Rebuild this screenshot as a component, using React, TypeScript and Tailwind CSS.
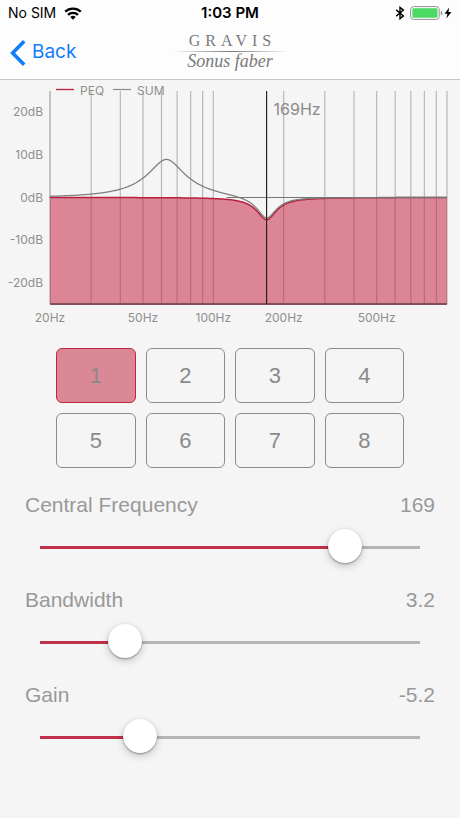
import { useState } from 'react';

interface Filter {
  frequency: number;
  q: number;
  gain: number;
}

interface SliderRowProps {
  id: string;
  label: string;
  value: number;
  min: number;
  max: number;
  step: number;
  onChange: (value: number) => void;
}

const BANDS = [1, 2, 3, 4, 5, 6, 7, 8];
const GRID_FREQUENCIES = [30, 40, 50, 60, 70, 80, 90, 100, 200, 300, 400, 500, 600, 700, 800, 900, 1000];
const FREQUENCY_LABELS = [20, 50, 100, 200, 500];
const GAIN_LABELS = [20, 10, 0, -10, -20];

const ROOM_FILTER: Filter = { frequency: 63, q: 2.1, gain: 9 };

const PLOT = { left: 50, right: 447, top: 11, bottom: 224 };
const MIN_FREQUENCY = 20;
const MAX_FREQUENCY = 1000;
const GAIN_SPAN = 50;

export default function App() {
  const [band, setBand] = useState(1);
  const [frequency, setFrequency] = useState(169);
  const [bandwidth, setBandwidth] = useState(3.2);
  const [gain, setGain] = useState(-5.2);

  return (
    <div className="min-h-screen bg-[#f5f5f5] font-['Liberation_Sans',Arial,sans-serif] text-[#8a8a8a]">
      <header className="border-b border-[#c6c6c6] bg-[#fdfdfd] font-[Inter,sans-serif]">
        <StatusBar />
        <NavBar />
      </header>

      <main>
        <ResponseChart filter={{ frequency, q: bandwidth * 1.3, gain }} />

        <div className="grid grid-cols-4 gap-[10px] px-14 pt-2">
          {BANDS.map(n => (
            <button
              key={n}
              type="button"
              aria-pressed={n === band}
              onClick={() => setBand(n)}
              className={
                n === band
                  ? 'h-[55px] rounded-md border border-[#bd2743] bg-[#db8896] text-[22px]'
                  : 'h-[55px] rounded-md border border-[#8c8c8c] text-[22px]'
              }
            >
              {n}
            </button>
          ))}
        </div>

        <div className="flex flex-col gap-6 px-[25px] pt-[25px] pb-14 text-[#999]">
          <SliderRow id="frequency" label="Central Frequency" value={frequency} min={20} max={200} step={1} onChange={setFrequency} />
          <SliderRow id="bandwidth" label="Bandwidth" value={bandwidth} min={1} max={12} step={0.1} onChange={setBandwidth} />
          <SliderRow id="gain" label="Gain" value={gain} min={-12} max={16} step={0.1} onChange={setGain} />
        </div>
      </main>
    </div>
  );
}

function StatusBar() {
  return (
    <div className="grid h-[26px] grid-cols-3 items-center px-2 leading-5 text-black">
      <div className="flex items-center gap-2 text-sm">
        <span>No SIM</span>
        <svg viewBox="0 0 18 13" className="h-[13px] w-[18px]" fill="none" stroke="#000" strokeWidth="2.4">
          <path d="M1.2 4.7a11.4 11.4 0 0 1 15.6 0" />
          <path d="M4 7.9a7.3 7.3 0 0 1 10 0" />
          <path d="M9 12.8 6.3 10.1a3.9 3.9 0 0 1 5.4 0z" fill="#000" stroke="none" />
        </svg>
      </div>
      <span className="text-center text-[15px] font-semibold">1:03 PM</span>
      <div className="flex items-center justify-end gap-[5px]">
        <svg viewBox="0 0 10 14" className="h-[14px] w-[10px]" fill="none" stroke="#000" strokeWidth="1.4">
          <path d="M1.2 3.9 8.4 9.9 5 12.6V1.4l3.4 2.7-7.2 6" />
        </svg>
        <svg viewBox="0 0 33 14" className="h-[14px] w-[33px]">
          <rect x="0.6" y="0.6" width="28.6" height="12.8" rx="3" fill="#fff" stroke="#8e8e8e" />
          <rect x="2.3" y="2.2" width="25.2" height="9.6" rx="1.4" fill="#4cd964" />
          <path d="M30.8 4.6a2.6 2.6 0 0 1 0 4.8z" fill="#8e8e8e" />
        </svg>
        <svg viewBox="0 0 8 12" className="-ml-1 h-3 w-2">
          <path d="M5.2.5.6 6.8h2.8L2.4 11.5 7.4 5H4.4z" fill="#000" />
        </svg>
      </div>
    </div>
  );
}

function NavBar() {
  return (
    <div className="grid h-[53px] grid-cols-[1fr_auto_1fr] items-center">
      <a href="#" className="flex items-center gap-[6px] pl-[10px] text-[19px] text-[#117dfa]">
        <svg viewBox="0 0 16 26" className="h-[26px] w-4" fill="none" stroke="currentColor" strokeWidth="3.6">
          <path d="M14.2 1.3 2.6 13l11.6 11.7" />
        </svg>
        Back
      </a>
      <div className="flex w-[117px] flex-col items-center pb-[2px] font-['Liberation_Serif',serif] text-[#7a7a7a]">
        <span className="pb-[2px] pl-[5px] text-base leading-4 tracking-[5px]">GRAVIS</span>
        <span className="h-px w-full bg-linear-to-r from-transparent via-[#7a7a7a] to-transparent" />
        <span className="text-lg leading-[18px] italic">Sonus faber</span>
      </div>
    </div>
  );
}

function ResponseChart({ filter }: { filter: Filter }) {
  const peq = buildCurve([filter]);
  const sum = buildCurve([filter, ROOM_FILTER]);
  const cursor = xFor(filter.frequency);

  return (
    <svg viewBox="0 0 460 260" className="block w-full font-[Inter,sans-serif]" role="img" aria-label="Frequency response">
      {GRID_FREQUENCIES.map(f => (
        <line key={f} x1={xFor(f)} x2={xFor(f)} y1={PLOT.top} y2={PLOT.bottom} stroke="#b8b8b8" strokeWidth="1.2" />
      ))}
      <line x1={PLOT.left} x2={PLOT.left} y1={PLOT.top} y2={PLOT.bottom} stroke="#a0a0a0" strokeWidth="1.2" />

      <path d={`${peq}L${PLOT.right} ${PLOT.bottom}L${PLOT.left} ${PLOT.bottom}Z`} fill="#c41e3f" fillOpacity="0.52" />
      <path d={peq} fill="none" stroke="#b8203f" strokeWidth="1.5" />
      <path d={sum} fill="none" stroke="#808080" strokeWidth="1.3" />
      <line x1={cursor - 40} x2={PLOT.right} y1={yFor(0)} y2={yFor(0)} stroke="#777" strokeWidth="1.2" />
      <line x1={PLOT.left} x2={PLOT.right} y1={PLOT.bottom} y2={PLOT.bottom} stroke="#83505a" strokeWidth="2" />
      <line x1={cursor} x2={cursor} y1={PLOT.top} y2={PLOT.bottom} stroke="#222" strokeWidth="1.2" />

      <line x1="56" x2="74" y1="9.5" y2="9.5" stroke="#bd2743" strokeWidth="1.4" />
      <line x1="113" x2="131" y1="9.5" y2="9.5" stroke="#8a8a8a" strokeWidth="1.2" />
      <g fill="#8f8f8f" fontSize="12">
        <text x="80" y="15">PEQ</text>
        <text x="137" y="15">SUM</text>
        {GAIN_LABELS.map(db => (
          <text key={db} x="43" y={yFor(db) + 4} textAnchor="end">{db}dB</text>
        ))}
        {FREQUENCY_LABELS.map(f => (
          <text key={f} x={xFor(f)} y="242" textAnchor="middle">{f}Hz</text>
        ))}
      </g>
      <text x={cursor + 7} y="35" fill="#8a8a8a" fontSize="16">{filter.frequency}Hz</text>
    </svg>
  );
}

function SliderRow({ id, label, value, min, max, step, onChange }: SliderRowProps) {
  const percent = ((value - min) / (max - min)) * 100;

  return (
    <div>
      <div className="flex justify-between text-[21px] leading-6">
        <label htmlFor={id}>{label}</label>
        <output htmlFor={id}>{value}</output>
      </div>
      <div className="mx-[15px] mt-[11px] grid items-center">
        <div className="col-start-1 row-start-1 mt-[2px] h-[3px] bg-[#b5b5b5]">
          <div className="h-full bg-[#c0304a]" style={{ width: `${percent}%` }} />
        </div>
        <input
          id={id}
          type="range"
          min={min}
          max={max}
          step={step}
          value={value}
          onChange={event => onChange(Number(event.target.value))}
          className="z-10 col-start-1 row-start-1 -mx-[2px] h-9 appearance-none bg-transparent focus:outline-none [&::-webkit-slider-thumb]:size-[34px] [&::-webkit-slider-thumb]:appearance-none [&::-webkit-slider-thumb]:rounded-full [&::-webkit-slider-thumb]:bg-white [&::-webkit-slider-thumb]:shadow-[0_3px_8px_rgba(0,0,0,0.2),0_1px_2px_rgba(0,0,0,0.35)]"
        />
      </div>
    </div>
  );
}

function xFor(frequency: number): number {
  const ratio = Math.log(frequency / MIN_FREQUENCY) / Math.log(MAX_FREQUENCY / MIN_FREQUENCY);
  return PLOT.left + ratio * (PLOT.right - PLOT.left);
}

function yFor(db: number): number {
  return (PLOT.top + PLOT.bottom) / 2 - (db / GAIN_SPAN) * (PLOT.bottom - PLOT.top);
}

// Magnitude of an analog peaking filter, in dB
function response({ frequency, q, gain }: Filter, f: number): number {
  const a = 10 ** (gain / 40);
  const x = f / frequency;
  const base = (1 - x * x) ** 2;
  return 10 * Math.log10((base + ((a * x) / q) ** 2) / (base + (x / (a * q)) ** 2));
}

function buildCurve(filters: Filter[]): string {
  const points: string[] = [];
  for (let x = PLOT.left; x <= PLOT.right; x++) {
    const f = MIN_FREQUENCY * (MAX_FREQUENCY / MIN_FREQUENCY) ** ((x - PLOT.left) / (PLOT.right - PLOT.left));
    const db = filters.reduce((total, filter) => total + response(filter, f), 0);
    points.push(`${x} ${yFor(db).toFixed(2)}`);
  }
  return `M${points.join('L')}`;
}
